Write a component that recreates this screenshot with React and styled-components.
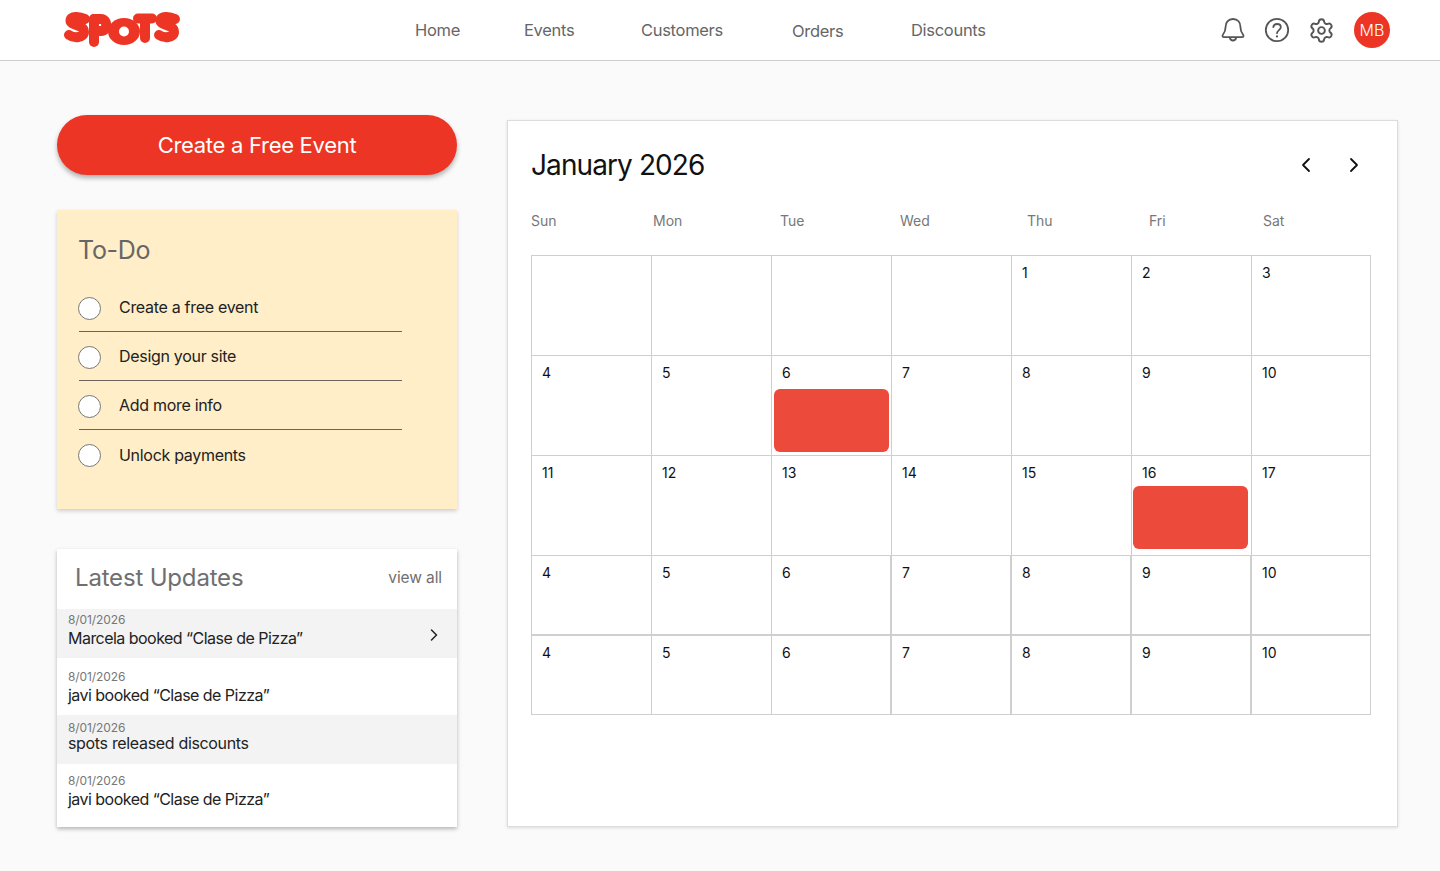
import React from 'react'
import styled, { createGlobalStyle } from 'styled-components'
import { ChevronLeft, ChevronRight, Settings } from 'lucide-react'

const GlobalStyle = createGlobalStyle`
    html, body {
        margin: 0;
        background: #fafafa;
        font-family: Inter, "Noto Sans", sans-serif;
    }
    * { box-sizing: border-box; }
`

const Header = styled.header`
    height: 61px;
    background: #fff;
    border-bottom: 1px solid #cdcdcd;
    display: flex;
    align-items: center;
    padding: 0 50px 0 63px;
`
const Logo = styled.svg`
    width: 119px;
    height: 38px;
    flex: none;
`
const Nav = styled.nav`
    display: grid;
    grid-template-columns: 109px 117px 151px 119px auto;
    margin-left: 233px;
    padding-top: 1px;
`
const NavItem = styled.a`
    font-size: 16.5px;
    letter-spacing: -0.3px;
    color: #666;
    padding-top: ${(props) => props.$drop || 0}px;
`
const HeaderIcons = styled.div`
    margin-left: auto;
    display: flex;
    align-items: center;
    color: #555;
`
const IconSlot = styled.div`
    width: 44px;
    display: flex;
    justify-content: center;
`
const Avatar = styled.div`
    width: 36px;
    height: 36px;
    border-radius: 50%;
    margin-left: 11px;
    background: #ec3524;
    color: #fff;
    font-size: 16px;
    font-weight: 300;
    display: flex;
    align-items: center;
    justify-content: center;
`

const Main = styled.main`
    display: grid;
    grid-template-columns: 400px 891px;
    column-gap: 50px;
    padding: 54px 0 43px 57px;
`
const LeftColumn = styled.div`
    display: flex;
    flex-direction: column;
`
const CreateButton = styled.button`
    height: 60px;
    border: 0;
    border-radius: 30px;
    background: #ec3524;
    color: #fff;
    font-family: inherit;
    font-size: 22px;
    font-weight: 400;
    letter-spacing: -0.29px;
    box-shadow: 0 3px 5px rgba(0, 0, 0, 0.3);
`
const TodoCard = styled.section`
    height: 299px;
    margin-top: 35px;
    padding: 24px 55px 0 21px;
    background: #ffeec7;
    box-shadow: 0 2px 4px rgba(0, 0, 0, 0.18);
`
const TodoTitle = styled.h2`
    margin: 0 0 17px 0;
    font-size: 25px;
    line-height: 32px;
    font-weight: 400;
    letter-spacing: -0.3px;
    color: #666;
`
const TodoRow = styled.div`
    height: 49px;
    display: flex;
    align-items: center;
    margin-left: 1px;
    padding-top: 2px;
    border-bottom: ${(props) => (props.$last ? 'none' : '1px solid #6b6459')};
    font-size: 16px;
    letter-spacing: -0.3px;
    color: #222;
`
const TodoLabel = styled.span`
    margin-top: -2px;
`
const Circle = styled.span`
    width: 23px;
    height: 23px;
    margin: 0 18px 0 -1px;
    border-radius: 50%;
    background: #fff;
    border: 1px solid #777;
`

const UpdatesCard = styled.section`
    height: 278px;
    margin-top: 40px;
    background: #fff;
    box-shadow: 0 2px 4px rgba(0, 0, 0, 0.28);
`
const UpdatesHeader = styled.div`
    height: 60px;
    display: flex;
    align-items: center;
    justify-content: space-between;
    padding: 0 15px 4px 18px;
`
const UpdatesTitle = styled.h2`
    margin: 0;
    font-size: 24px;
    font-weight: 400;
    letter-spacing: -0.18px;
    color: #6f6f6f;
`
const ViewAll = styled.a`
    font-size: 15.5px;
    letter-spacing: -0.1px;
    color: #6f6f6f;
`
const UpdateRow = styled.div`
    height: ${(props) => props.$height}px;
    padding: ${(props) => props.$pad}px 13px 0 11px;
    background: ${(props) => (props.$shaded ? '#f3f3f3' : '#fff')};
    display: flex;
    justify-content: space-between;
    align-items: flex-start;
`
const UpdateDate = styled.div`
    font-size: 12px;
    line-height: 14px;
    letter-spacing: -0.1px;
    color: #777;
`
const UpdateText = styled.div`
    font-size: 16px;
    line-height: 20px;
    letter-spacing: ${(props) => props.$spacing}px;
    color: #222;
    margin-top: ${(props) => props.$gap}px;
`
const RowChevron = styled(ChevronRight)`
    margin-top: 12px;
    color: #222;
`

const CalendarCard = styled.section`
    height: 707px;
    margin-top: 5px;
    padding: 0 26px 0 23px;
    background: #fff;
    border: 1px solid #dcdcdc;
    box-shadow: 0 1px 3px rgba(0, 0, 0, 0.12);
`
const CalendarTop = styled.div`
    height: 88px;
    display: flex;
    align-items: center;
    justify-content: space-between;
`
const MonthTitle = styled.h1`
    margin: 0;
    font-size: 28px;
    font-weight: 400;
    letter-spacing: -0.9px;
    color: #111;
`
const MonthArrows = styled.div`
    display: flex;
    gap: 24px;
    margin-right: 5px;
    color: #111;
`
const WeekDays = styled.div`
    display: grid;
    grid-template-columns: 122px 127px 120px 127px 122px 114px auto;
    height: 46px;
    padding-top: 3px;
    font-size: 14px;
    line-height: 17px;
    color: #777;
`
const MonthGrid = styled.div`
    display: grid;
    grid-template-columns: repeat(6, 120px) 119px;
    grid-template-rows: 100px 100px 100px 80px 79px;
    width: 840px;
    border-top: 1px solid #cfcfcf;
    border-left: 1px solid #cfcfcf;
`
const DayCell = styled.div`
    border-right: ${(props) => (props.$thickRight ? 2 : 1)}px solid #cfcfcf;
    border-bottom: ${(props) => (props.$thickBottom ? 2 : 1)}px solid #cfcfcf;
    padding: 8px 0 0 10px;
    font-size: 14px;
    line-height: 18px;
    color: #111;
`
const EventBlock = styled.div`
    width: 115px;
    height: 63px;
    margin: ${(props) => props.$top}px 0 0 ${(props) => props.$left}px;
    border-radius: 6px;
    background: #ec4a3a;
`

const navLinks = ['Home', 'Events', 'Customers', 'Orders', 'Discounts']
const todos = ['Create a free event', 'Design your site', 'Add more info', 'Unlock payments']
const weekDays = ['Sun', 'Mon', 'Tue', 'Wed', 'Thu', 'Fri', 'Sat']
const updates = [
    { text: 'Marcela booked “Clase de Pizza”', shaded: true, height: 49, pad: 4, gap: 1, spacing: -0.53, arrow: true },
    { text: 'javi booked “Clase de Pizza”', height: 57, pad: 12, gap: 1, spacing: -0.53 },
    { text: 'spots released discounts', shaded: true, height: 49, pad: 6, gap: -2, spacing: -0.33 },
    { text: 'javi booked “Clase de Pizza”', height: 63, pad: 10, gap: 1, spacing: -0.53 },
]
const days = [
    '', '', '', '', 1, 2, 3,
    4, 5, 6, 7, 8, 9, 10,
    11, 12, 13, 14, 15, 16, 17,
    4, 5, 6, 7, 8, 9, 10,
    4, 5, 6, 7, 8, 9, 10,
]
// cell index -> where the event sits under the number
const events = { 9: { top: 7, left: -8 }, 19: { top: 4, left: -9 } }

const BellIcon = () => (
    <svg width="26" height="28" viewBox="0 0 26 28" fill="none" stroke="currentColor" strokeWidth="1.8" strokeLinejoin="round">
        <path d="M13 3c-5 0-7.400 3.600-7.400 7.800 0 4.400-1.300 6.300-2.700 8-.9 1.100-.3 2.400 1.100 2.400h18c1.400 0 2-1.300 1.100-2.400-1.400-1.700-2.700-3.600-2.700-8C20.400 6.600 18 3 13 3z" />
        <path d="M9.800 21.500c.4 1.900 1.600 3 3.200 3s2.800-1.100 3.200-3" />
    </svg>
)

const HelpIcon = () => (
    <svg width="26" height="26" viewBox="0 0 26 26" fill="none" stroke="currentColor" strokeWidth="1.800" strokeLinecap="round">
        <circle cx="13" cy="13" r="11.200" />
        <path d="M9.300 10.200c.3-2 1.800-3.200 3.800-3.200 2.200 0 3.700 1.400 3.700 3.200 0 2.800-3.800 3-3.800 6" />
        <path d="M13 19.400v.1" strokeWidth="2.200" />
    </svg>
)

const SpotsLogo = () => (
    <Logo viewBox="0 0 119 38" fill="none" stroke="#ec3524" strokeWidth="10" strokeLinecap="round" strokeLinejoin="round">
        <path d="M22 8C16 5 7.500 5 7.500 9.500C7.500 15 21 13 21 21C21 27 11 27.500 6 24" />
        <path d="M31 8V31" />
        <path d="M31 8H38C45 8 45 20 38 20H31" />
        <path d="M75 7.500H89M82 8V27" />
        <ellipse cx="61" cy="20.500" rx="16" ry="13.500" fill="#ec3524" stroke="none" />
        <circle cx="61" cy="20.500" r="5" fill="#fff" stroke="none" />
        <path d="M112 8C106 5 97.500 5 97.500 9.500C97.500 15 111 13 111 21C111 27 101 27.500 96 24" />
    </Logo>
)

const App = () => {
    return (
        <>
            <GlobalStyle />
            <Header>
                <SpotsLogo />
                <Nav>
                    {navLinks.map((link) => (
                        <NavItem key={link} $drop={link === 'Orders' ? 1 : 0}>{link}</NavItem>
                    ))}
                </Nav>
                <HeaderIcons>
                    <IconSlot><BellIcon /></IconSlot>
                    <IconSlot><HelpIcon /></IconSlot>
                    <IconSlot><Settings size={27} strokeWidth={1.700} /></IconSlot>
                    <Avatar>MB</Avatar>
                </HeaderIcons>
            </Header>
            <Main>
                <LeftColumn>
                    <CreateButton>Create a Free Event</CreateButton>
                    <TodoCard>
                        <TodoTitle>To-Do</TodoTitle>
                        {todos.map((todo, i) => (
                            <TodoRow key={todo} $last={i === todos.length - 1}>
                                <Circle />
                                <TodoLabel>{todo}</TodoLabel>
                            </TodoRow>
                        ))}
                    </TodoCard>
                    <UpdatesCard>
                        <UpdatesHeader>
                            <UpdatesTitle>Latest Updates</UpdatesTitle>
                            <ViewAll>view all</ViewAll>
                        </UpdatesHeader>
                        {updates.map((update, i) => (
                            <UpdateRow key={i} $shaded={update.shaded} $height={update.height} $pad={update.pad}>
                                <div>
                                    <UpdateDate>8/01/2026</UpdateDate>
                                    <UpdateText $gap={update.gap} $spacing={update.spacing}>{update.text}</UpdateText>
                                </div>
                                {update.arrow && <RowChevron size={20} strokeWidth={1.800} />}
                            </UpdateRow>
                        ))}
                    </UpdatesCard>
                </LeftColumn>
                <CalendarCard>
                    <CalendarTop>
                        <MonthTitle>January 2026</MonthTitle>
                        <MonthArrows>
                            <ChevronLeft size={24} strokeWidth={1.800} />
                            <ChevronRight size={24} strokeWidth={1.800} />
                        </MonthArrows>
                    </CalendarTop>
                    <WeekDays>
                        {weekDays.map((day) => <span key={day}>{day}</span>)}
                    </WeekDays>
                    <MonthGrid>
                        {days.map((day, i) => {
                            const col = i % 7
                            const row = Math.floor(i / 7)
                            return (
                                <DayCell
                                    key={i}
                                    $thickRight={row >= 3 && col >= 2 && col <= 5}
                                    $thickBottom={row === 3}
                                >
                                    {day}
                                    {events[i] && <EventBlock $top={events[i].top} $left={events[i].left} />}
                                </DayCell>
                            )
                        })}
                    </MonthGrid>
                </CalendarCard>
            </Main>
        </>
    )
}

export default App
